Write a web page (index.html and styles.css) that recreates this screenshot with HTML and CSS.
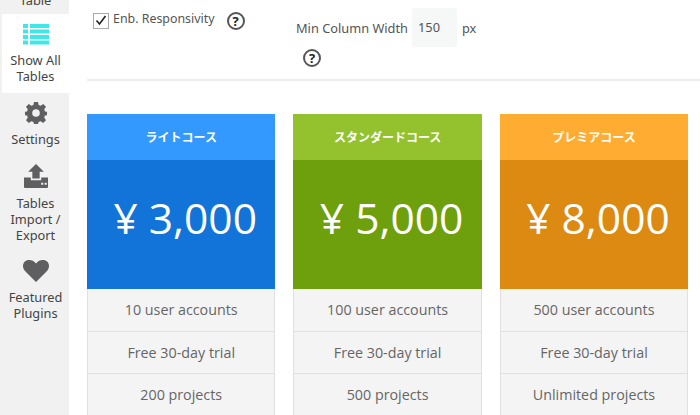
FILE: index.html
```html
<!DOCTYPE html>
<html lang="en">

<head>
  <meta charset="UTF-8">
  <title>Show All Tables</title>
  <link rel="stylesheet" href="styles.css">
</head>

<body>

  <!-- Sidebar -->
  <nav class="sidebar">
    <div class="nav-cut">Table</div>
    <a class="nav-item active">
      <svg class="nav-icon" width="26" height="21" viewBox="0 0 26 21">
        <path fill="#3fe8e8" d="M0 0h5v4H0zM7 0h19v4H7zM0 5.500h5v4H0zM7 5.500h19v4H7zM0 11h5v4H0zM7 11h19v4H7zM0 16.500h5v4H0zM7 16.500h19v4H7z"/>
      </svg>
      <span>Show All Tables</span>
    </a>
    <a class="nav-item">
      <svg class="nav-icon" width="22" height="22" viewBox="0 0 22 22">
        <path fill="#5f5f62" fill-rule="evenodd" d="M9 0h4l.6 3 2 .8L18.200 2 21 4.800l-1.800 2.600.8 2 3 .6v3l-3 .6-.8 2 1.800 2.600L18.200 21l-2.600-1.800-2 .8-.6 2H9l-.6-2-2-.8L3.800 21 1 18.200l1.800-2.600-.8-2-3-.6v-3l3-.6.8-2L1 4.800 3.800 2l2.600 1.800 2-.8zM11 7.200a3.800 3.800 0 1 0 0 7.600 3.800 3.800 0 0 0 0-7.600z"/>
      </svg>
      <span>Settings</span>
    </a>
    <a class="nav-item">
      <svg class="nav-icon" width="24" height="24" viewBox="0 0 23 23">
        <path fill="#5f5f62" fill-rule="evenodd" d="M11.500 0L19 7.500h-4V14H8V7.500H4zM0 13h6.500v2.500h10V13H23v9a1 1 0 0 1-1 1H1a1 1 0 0 1-1-1zM16.500 18h2v2h-2zM19.800 18h2v2h-2z"/>
      </svg>
      <span>Tables Import / Export</span>
    </a>
    <a class="nav-item">
      <svg class="nav-icon" width="26" height="22" viewBox="0 0 26 22">
        <path fill="#5f5f62" d="M13 22L2.500 11.500C-1 8-.5 3.500 2 1.500 5-.8 10-.5 13 3.500 16-.5 21-.8 24 1.500c2.500 2 3 6.500-.5 10z"/>
      </svg>
      <span>Featured Plugins</span>
    </a>
  </nav>

  <main class="content">

    <!-- Table options -->
    <div class="options">
      <div class="option-check">
        <span class="checkbox">
          <svg width="12" height="11" viewBox="0 0 12 11"><path fill="none" stroke="#222" stroke-width="1.600" d="M1.500 5.500l3 3.500 6-8"/></svg>
        </span>
        <label>Enb. Responsivity</label>
        <span class="help help-first">?</span>
      </div>
      <div class="option-width">
        <div class="width-row">
          <label>Min Column Width</label>
          <span class="width-input">150</span>
          <span class="unit">px</span>
        </div>
        <span class="help help-second">?</span>
      </div>
    </div>

    <hr class="divider">

    <!-- Pricing table -->
    <div class="pricing">
      <div class="column blue">
        <div class="col-title">ライトコース</div>
        <div class="col-price">¥ 3,000</div>
        <div class="col-row">10 user accounts</div>
        <div class="col-row">Free 30-day trial</div>
        <div class="col-row">200 projects</div>
      </div>
      <div class="column green">
        <div class="col-title">スタンダードコース</div>
        <div class="col-price">¥ 5,000</div>
        <div class="col-row">100 user accounts</div>
        <div class="col-row">Free 30-day trial</div>
        <div class="col-row">500 projects</div>
      </div>
      <div class="column orange">
        <div class="col-title">プレミアコース</div>
        <div class="col-price">¥ 8,000</div>
        <div class="col-row">500 user accounts</div>
        <div class="col-row">Free 30-day trial</div>
        <div class="col-row">Unlimited projects</div>
      </div>
    </div>

  </main>

</body>

</html>
```

FILE: styles.css
```css
/* General Page Styles */
html,
body {
  height: 415px;
  overflow: hidden;
}

body {
  margin: 0;
  display: flex;
  background: #fff;
  font-family: 'Open Sans', sans-serif;
  color: #444;
}

/* Sidebar */
.sidebar {
  width: 69px;
  flex-shrink: 0;
  background: #f1f1f1;
  font-family: 'Noto Sans', sans-serif;
  font-size: 12.800px;
  line-height: 16px;
  color: #444;
  text-align: center;
  overflow: hidden;
}

.nav-cut {
  height: 14px;
  margin-left: 2px;
  line-height: 0;
}

.nav-item {
  display: flex;
  flex-direction: column;
  align-items: center;
  margin-left: 2px;
  padding: 9px 0 8px;
}

.nav-item.active {
  background: #fff;
  height: 79px;
  box-sizing: border-box;
  padding: 10px 0 0;
}

.nav-icon {
  display: block;
  margin-bottom: 7px;
}

/* Options */
.content {
  flex: 1;
  min-width: 0;
  padding-left: 18px;
}

.options {
  display: flex;
  height: 79px;
  font-family: 'Noto Sans', sans-serif;
  font-size: 12.800px;
  color: #555;
}

.option-check {
  display: flex;
  align-items: center;
  align-self: flex-start;
  width: 203px;
  margin: 12px 0 0 6px;
  height: 17px;
}

.option-check label {
  font-size: 12.400px;
  margin-top: -4px;
}

.checkbox {
  width: 14px;
  height: 14px;
  border: 1px solid #aaa;
  margin-right: 4px;
  display: flex;
  align-items: center;
  justify-content: center;
}

.help {
  width: 14px;
  height: 14px;
  border: 2px solid #555;
  border-radius: 50%;
  display: flex;
  align-items: center;
  justify-content: center;
  font-family: 'Open Sans', sans-serif;
  font-weight: 700;
  font-size: 13px;
  color: #222;
}

.help-first {
  margin-left: 12px;
}

.option-width {
  padding-top: 8px;
}

.width-row {
  display: flex;
  align-items: center;
}

.width-input {
  width: 45px;
  height: 39px;
  box-sizing: border-box;
  margin-left: 4px;
  padding-left: 6px;
  line-height: 39px;
  background: #f6f7f7;
  border-radius: 3px;
}

.unit {
  margin-left: 5px;
}

.help-second {
  margin: 2px 0 0 7px;
}

.divider {
  margin: 0;
  height: 2px;
  border: none;
  background: #eee;
}

/* Pricing Table */
.pricing {
  display: flex;
  gap: 18px;
  margin-top: 33px;
}

.column {
  width: 188.400px;
  flex-shrink: 0;
  text-align: center;
}

.col-title {
  height: 46px;
  line-height: 46px;
  color: #fff;
  font-family: 'Noto Sans CJK JP', sans-serif;
  font-size: 12px;
  font-weight: 700;
}

.col-price {
  height: 129px;
  line-height: 115px;
  padding-left: 8px;
  box-sizing: border-box;
  color: #fff;
  font-size: 42.500px;
}

.col-row {
  height: 42.500px;
  line-height: 41.500px;
  box-sizing: border-box;
  background: #f4f4f4;
  border: 1px solid #e0e0e0;
  border-top: none;
  color: #666;
  font-size: 14.300px;
}

.blue .col-title { background: #3399ff; }
.blue .col-price { background: #1274d9; }
.green .col-title { background: #93c22e; }
.green .col-price { background: #6e9f0c; }
.orange .col-title { background: #ffac33; }
.orange .col-price { background: #dc8a12; }
```
